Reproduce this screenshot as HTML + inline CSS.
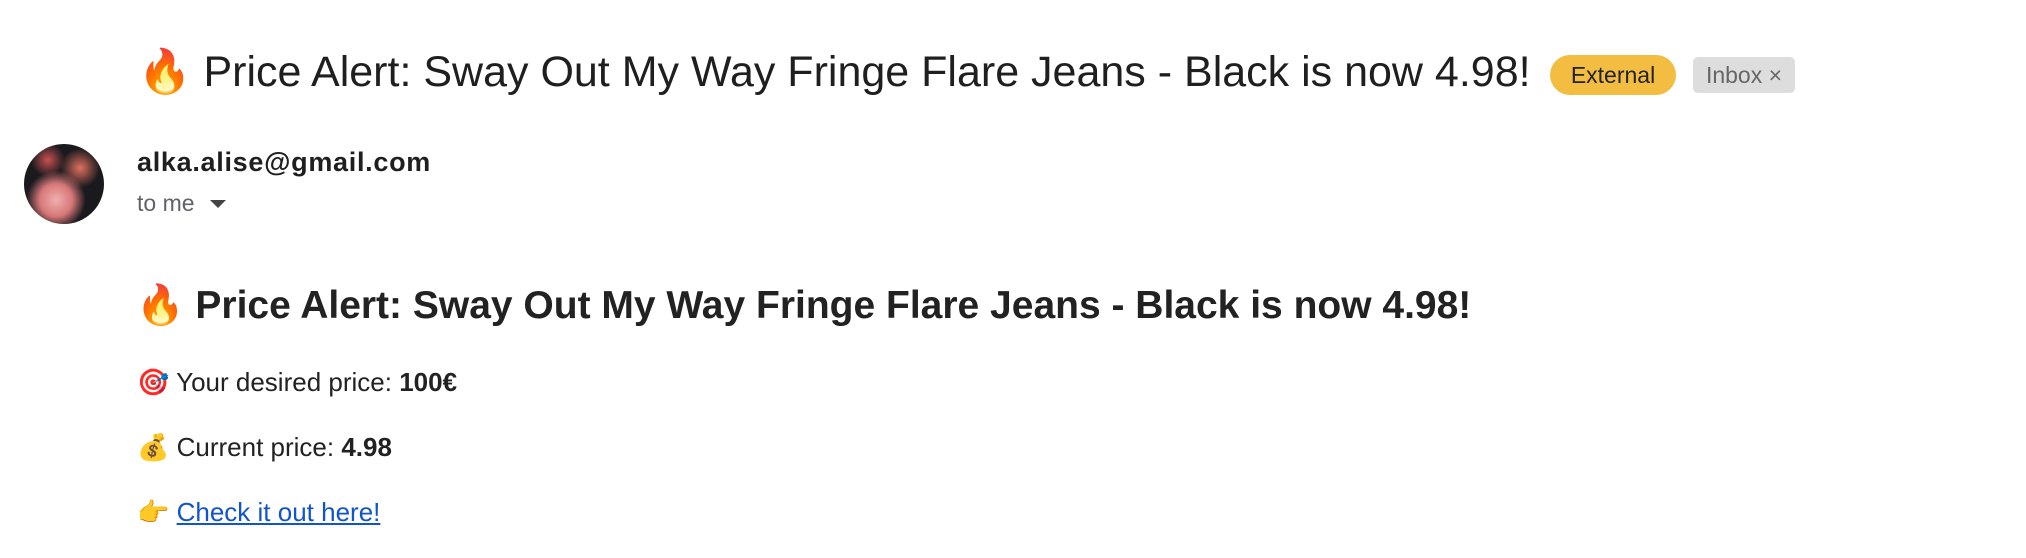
<!DOCTYPE html>
<html><head><meta charset="utf-8"><style>
body{margin:0;width:2026px;height:558px;background:#fff;position:relative;overflow:hidden;font-family:"Liberation Sans",Arial,sans-serif;color:#222}
.a{position:absolute;white-space:nowrap}
.em{font-family:"Noto Color Emoji","DejaVu Sans",sans-serif}
</style></head><body>
<div class="a" style="left:138px;top:45px;font-size:43px;line-height:54px;color:#1f1f1f"><span class="em">🔥</span> Price Alert: Sway Out My Way Fringe Flare Jeans - Black is now 4.98!</div>
<div class="a" style="left:1550px;top:55px;width:126px;height:40px;border-radius:20px;background:#f3bd42;font-size:23px;line-height:40px;text-align:center;color:#222">External</div>
<div class="a" style="left:1693px;top:57px;width:102px;height:36px;border-radius:5px;background:#dddddd;font-size:23px;line-height:36px;text-align:center;color:#666">Inbox ×</div>
<div class="a" style="left:24px;top:144px;width:80px;height:80px;border-radius:50%;background:radial-gradient(circle at 40% 70%,#f0b0b0 0,#d87878 22%,transparent 40%),radial-gradient(circle at 70% 30%,#e07060 0,transparent 25%),radial-gradient(circle at 30% 20%,#c85050 0,transparent 20%),#1a1a1e"></div>
<div class="a" style="left:137px;top:146px;font-size:27px;font-weight:bold;line-height:32px;color:#1f1f1f;letter-spacing:0.7px">alka.alise@gmail.com</div>
<div class="a" style="left:137px;top:189px;font-size:23px;line-height:28px;color:#5f6368">to me</div>
<div class="a" style="left:210px;top:200px;width:0;height:0;border-left:8px solid transparent;border-right:8px solid transparent;border-top:8px solid #444"></div>
<div class="a" style="left:136px;top:282px;font-size:39px;font-weight:bold;line-height:46px;color:#222"><span class="em">🔥</span> Price Alert: Sway Out My Way Fringe Flare Jeans - Black is now 4.98!</div>
<div class="a" style="left:137px;top:366px;font-size:26px;line-height:32px"><span class="em">🎯</span> Your desired price: <b>100€</b></div>
<div class="a" style="left:137px;top:431px;font-size:26px;line-height:32px"><span class="em">💰</span> Current price: <b>4.98</b></div>
<div class="a" style="left:137px;top:496px;font-size:26px;line-height:32px"><span class="em">👉</span> <span style="color:#1155cc;text-decoration:underline">Check it out here!</span></div>
</body></html>
